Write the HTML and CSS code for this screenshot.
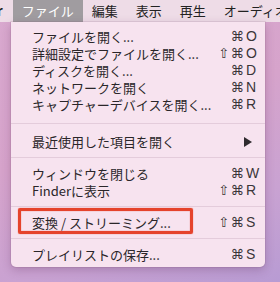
FILE: index.html
```html
<!DOCTYPE html>
<html lang="ja">
<head>
    <meta charset="UTF-8">
    <meta name="viewport" content="width=device-width, initial-scale=1.0">
    <title>ファイル</title>
    <link rel="stylesheet" href="styles.css">
</head>
<body>
    <div class="desktop">
        <div class="menubar">
            <span class="menubar-item app">r</span>
            <span class="menubar-item active">ファイル</span>
            <span class="menubar-item">編集</span>
            <span class="menubar-item">表示</span>
            <span class="menubar-item">再生</span>
            <span class="menubar-item">オーディオ</span>
        </div>

        <div class="menu">
            <div class="menu-item">
                <span class="label">ファイルを開く...</span>
                <span class="shortcut"><span class="mods">⌘</span><span class="key">O</span></span>
            </div>
            <div class="menu-item">
                <span class="label">詳細設定でファイルを開く...</span>
                <span class="shortcut"><span class="mods">⇧⌘</span><span class="key">O</span></span>
            </div>
            <div class="menu-item">
                <span class="label">ディスクを開く...</span>
                <span class="shortcut"><span class="mods">⌘</span><span class="key">D</span></span>
            </div>
            <div class="menu-item">
                <span class="label">ネットワークを開く</span>
                <span class="shortcut"><span class="mods">⌘</span><span class="key">N</span></span>
            </div>
            <div class="menu-item">
                <span class="label">キャプチャーデバイスを開く...</span>
                <span class="shortcut"><span class="mods">⌘</span><span class="key">R</span></span>
            </div>

            <div class="separator wide"></div>

            <div class="menu-item">
                <span class="label">最近使用した項目を開く</span>
                <svg class="submenu" width="8" height="10" viewBox="0 0 8 10"><polygon points="0,0 8,5 0,10" fill="#2f2a2e"/></svg>
            </div>

            <div class="separator"></div>

            <div class="menu-item">
                <span class="label">ウィンドウを閉じる</span>
                <span class="shortcut"><span class="mods">⌘</span><span class="key">W</span></span>
            </div>
            <div class="menu-item">
                <span class="label">Finderに表示</span>
                <span class="shortcut"><span class="mods">⇧⌘</span><span class="key">R</span></span>
            </div>

            <div class="separator"></div>

            <div class="menu-item marked">
                <span class="label">変換 / ストリーミング...</span>
                <span class="shortcut"><span class="mods">⇧⌘</span><span class="key">S</span></span>
            </div>

            <div class="separator"></div>

            <div class="menu-item">
                <span class="label">プレイリストの保存...</span>
                <span class="shortcut"><span class="mods">⌘</span><span class="key">S</span></span>
            </div>
        </div>
    </div>
</body>
</html>
```

FILE: styles.css
```css
body {
    margin: 0;
    width: 280px;
    height: 282px;
    overflow: hidden;
    font-family: "Noto Sans CJK JP", "Noto Sans", sans-serif;
    color: #2a2629;
}

.desktop {
    height: 282px;
    display: flex;
    flex-direction: column;
    background: linear-gradient(160deg, #d9a9cf 0%, #d6a3cb 45%, #c9a2d2 75%, #b89bd3 100%);
}

.menubar {
    height: 22px;
    display: flex;
    background-color: #eedce7;
    font-size: 13px;
    line-height: 22px;
    white-space: nowrap;
    overflow: hidden;
}

.menubar-item {
    padding: 0 9px;
    color: #222;
}

.menubar-item.app {
    font-weight: bold;
    margin-left: -3px;
    padding: 0 10px 0 0;
}

.menubar-item.active {
    background-color: #a09ca0;
    color: #ffffff;
}

.menu {
    margin-left: 11px;
    width: 254px;
    box-sizing: border-box;
    padding: 6px 0 4px;
    background-color: #f7e3ef;
    border-radius: 0 0 5px 5px;
    box-shadow: 0 3px 10px rgba(80, 30, 70, 0.25), 0 0 0 1px rgba(120, 80, 110, 0.12);
    font-size: 13px;
}

.menu-item {
    position: relative;
    height: 17px;
    line-height: 17px;
    display: flex;
    align-items: center;
    padding: 0 5px 0 21px;
    white-space: nowrap;
}

.label {
    flex: 1;
}

.shortcut {
    display: flex;
    align-items: center;
    color: #3b3639;
}

.mods {
    font-family: "DejaVu Sans", sans-serif;
    font-size: 13.5px;
    letter-spacing: 1px;
    padding-right: 1px;
}

.key {
    width: 14px;
    font-family: "Liberation Sans", sans-serif;
    font-size: 14px;
}

.submenu {
    margin-right: 8px;
}

.separator {
    height: 15px;
    display: flex;
    align-items: center;
}

.separator::before {
    content: "";
    flex: 1;
    height: 1px;
    background-color: #e4ccdb;
}

.separator.wide {
    height: 20px;
}

.menu-item.marked::after {
    content: "";
    position: absolute;
    left: 7px;
    top: -6px;
    width: 175px;
    height: 26px;
    box-sizing: border-box;
    border: 3px solid #e5432c;
    border-radius: 2px;
    box-shadow: 0 0 1px #e5432c, inset 0 0 1px #e5432c;
}
```
